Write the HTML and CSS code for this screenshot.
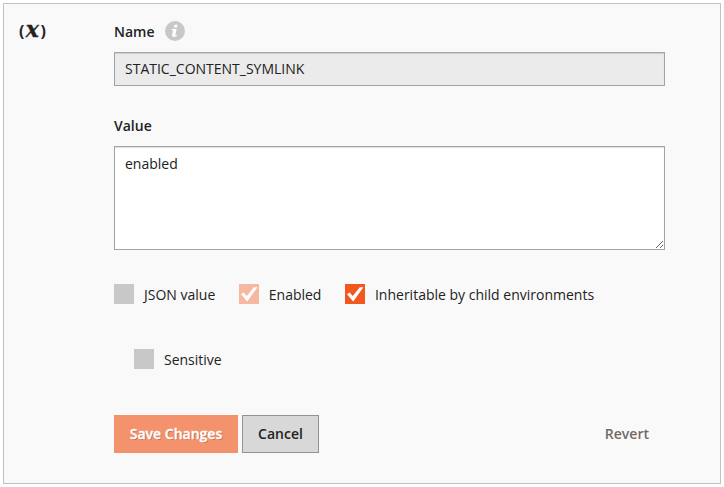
FILE: index.html
```html
<!DOCTYPE html>
<html lang="en">
<head>
<meta charset="utf-8">
<title>Variable</title>
<link rel="stylesheet" href="styles.css">
</head>
<body>
<main class="panel">
  <div class="variable-icon"><span>(</span><i>x</i><span>)</span></div>
  <form class="form">
    <div class="label-row">
      <label class="label" for="name">Name</label>
      <svg class="info" viewBox="0 0 20 20" aria-hidden="true">
        <circle cx="10" cy="10" r="10" fill="#c8c8c8"/>
        <path d="M9.400 3.800h3.200l-.6 2.700H8.800zM6.800 8h4.800l-1.100 5.200q-.2 1 .4 1 .6 0 1.300-.5l-.3 1.400q-1.200.8-3 .8-2.300 0-1.800-2.200l.9-4q.1-.5-.3-.5H6.500z" fill="#fff"/>
      </svg>
    </div>
    <input class="field name-field" id="name" type="text" value="STATIC_CONTENT_SYMLINK" readonly>
    <label class="label value-label" for="value">Value</label>
    <textarea class="field value-field" id="value" spellcheck="false">enabled</textarea>
    <div class="checks">
      <div class="check"><span class="box"></span>JSON value</div>
      <div class="check"><span class="box box-dim"><svg viewBox="0 0 20 20"><path d="M2 10.200L4.600 8.400 7.800 11.900 14.800 3.300H18.400L8.200 17.500z" fill="#fff"/></svg></span>Enabled</div>
      <div class="check"><span class="box box-on"><svg viewBox="0 0 20 20"><path d="M2 10.200L4.600 8.400 7.800 11.900 14.800 3.300H18.400L8.200 17.500z" fill="#fff"/></svg></span>Inheritable by child environments</div>
      <div class="check check-sensitive"><span class="box"></span>Sensitive</div>
    </div>
    <div class="actions">
      <button class="button save" type="button">Save Changes</button>
      <button class="button cancel" type="button">Cancel</button>
      <button class="button revert" type="button">Revert</button>
    </div>
  </form>
</main>
</body>
</html>
```

FILE: styles.css
```css
* {
  box-sizing: border-box;
}

body {
  margin: 0;
  padding: 3px;
  background: #fff;
  color: #222;
  font: 14px/20px "Open Sans", sans-serif;
}

.panel {
  display: flex;
  width: 718px;
  height: 481px;
  padding: 17px 0 0 15px;
  border: 1px solid #c1c1c1;
  background: #f9f9f9;
}

.variable-icon {
  display: flex;
  align-items: baseline;
  width: 95px;
  height: 18px;
  font-size: 16px;
  font-weight: 700;
  line-height: 17px;
}

.variable-icon i {
  width: 16px;
  font-family: "DejaVu Serif", serif;
  font-size: 22px;
  line-height: 17px;
  text-align: center;
  -webkit-text-stroke: .3px #222;
}

.form {
  width: 551px;
}

.label-row {
  display: flex;
  align-items: center;
  height: 20px;
  margin-bottom: 11px;
}

.label {
  display: block;
  font-weight: 600;
}

.label-row .label {
  padding-top: 1px;
}

.info {
  width: 20px;
  height: 20px;
  margin-left: 10px;
}

.field {
  display: block;
  width: 551px;
  margin: 0;
  border: 1px solid #a3a3a3;
  border-radius: 0;
  outline: 0;
  color: #222;
  font: 14px/20px "Open Sans", sans-serif;
  box-shadow: inset 0 1px 1px rgba(0, 0, 0, .12);
}

.name-field {
  height: 34px;
  padding: 5px 10px 7px;
  background: #ebebeb;
}

.value-label {
  margin: 30px 0 10px;
}

.value-field {
  height: 104px;
  padding: 7px 10px;
  background: #fff;
}

.checks {
  display: flex;
  flex-wrap: wrap;
  gap: 45px 23.5px;
  margin-top: 34px;
}

.check {
  display: flex;
  height: 20px;
  line-height: 21px;
  white-space: nowrap;
}

.check-sensitive {
  margin-left: 20px;
}

.box {
  width: 20px;
  height: 20px;
  margin-right: 10px;
  background: #c8c8c8;
}

.box svg {
  display: block;
}

.box-dim {
  background: #f6b8a0;
}

.box-on {
  background: #f1571f;
}

.actions {
  display: flex;
  gap: 4px;
  margin-top: 46px;
}

.button {
  height: 38px;
  padding: 0;
  border: 0;
  background: none;
  color: #222;
  font: 600 14px/20px "Open Sans", sans-serif;
}

.save {
  width: 124px;
  background: #f4926d;
  color: #fff;
  text-shadow: 1px 1px 0 rgba(0, 0, 0, .2);
  -webkit-text-stroke: .3px #fff;
}

.cancel {
  width: 77px;
  border: 1px solid #929292;
  background: #d8d8d8;
}

.revert {
  margin-left: auto;
  padding: 0 16px;
  color: #6f6a68;
}
```
